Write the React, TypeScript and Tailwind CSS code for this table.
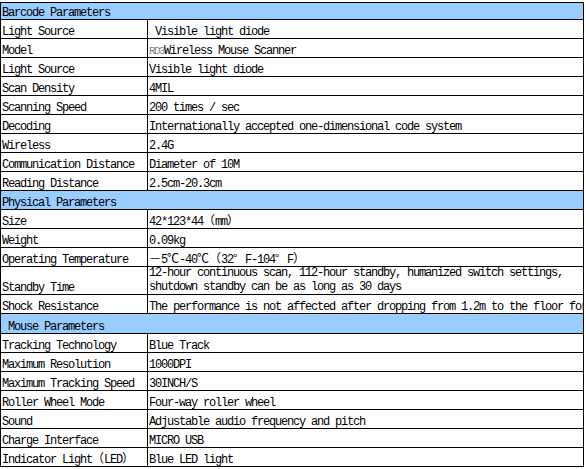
import React from "react";

const FW = ({ c }: { c: string }) => (
  <span className="inline-block w-[12px] tracking-normal text-left font-['Noto_Sans_CJK_SC',sans-serif]">
    {c}
  </span>
);

type Row =
  | { kind: "head"; text: string; h: string }
  | { kind: "row"; label: React.ReactNode; value: React.ReactNode; tall?: boolean };

const rows: Row[] = [
  { kind: "head", text: "Barcode Parameters", h: "h-[17px]" },
  { kind: "row", label: "Light Source", value: " Visible light diode" },
  {
    kind: "row",
    label: "Model",
    value: (
      <>
        <span className="text-[11px] tracking-[-1.6px] text-[#808080]">RD3</span>
        Wireless Mouse Scanner
      </>
    ),
  },
  { kind: "row", label: "Light Source", value: "Visible light diode" },
  { kind: "row", label: "Scan Density", value: "4MIL" },
  { kind: "row", label: "Scanning Speed", value: "200 times / sec" },
  { kind: "row", label: "Decoding", value: "Internationally accepted one-dimensional code system" },
  { kind: "row", label: "Wireless", value: "2.4G" },
  { kind: "row", label: "Communication Distance", value: "Diameter of 10M" },
  { kind: "row", label: "Reading Distance", value: "2.5cm-20.3cm" },
  { kind: "head", text: "Physical Parameters", h: "h-[19px]" },
  {
    kind: "row",
    label: "Size",
    value: (
      <>
        42*123*44
        <FW c="（" />
        mm
        <FW c="）" />
      </>
    ),
  },
  { kind: "row", label: "Weight", value: "0.09kg" },
  {
    kind: "row",
    label: "Operating Temperature",
    value: (
      <>
        <FW c="－" />5<FW c="℃" />-40<FW c="℃" />
        <FW c="（" />
        32<FW c="°" />F-104<FW c="°" />F<FW c="）" />
      </>
    ),
  },
  {
    kind: "row",
    label: "Standby Time",
    tall: true,
    value: (
      <>
        12-hour continuous scan, 112-hour standby, humanized switch settings,
        <br />
        shutdown standby can be as long as 30 days
      </>
    ),
  },
  {
    kind: "row",
    label: "Shock Resistance",
    value: "The performance is not affected after dropping from 1.2m to the floor for",
  },
  { kind: "head", text: " Mouse Parameters", h: "h-[20px]" },
  { kind: "row", label: "Tracking Technology", value: "Blue Track" },
  { kind: "row", label: "Maximum Resolution", value: "1000DPI" },
  { kind: "row", label: "Maximum Tracking Speed", value: "30INCH/S" },
  { kind: "row", label: "Roller Wheel Mode", value: "Four-way roller wheel" },
  { kind: "row", label: "Sound", value: "Adjustable audio frequency and pitch" },
  { kind: "row", label: "Charge Interface", value: "MICRO USB" },
  {
    kind: "row",
    label: (
      <>
        Indicator Light<FW c="（" />
        LED
        <FW c="）" />
      </>
    ),
    value: "Blue LED light",
  },
];

export default function App() {
  return (
    <div className="w-[586px] h-[469px] bg-white pt-[2px] font-['Liberation_Mono','Noto_Sans_CJK_SC',monospace] text-[12px] tracking-[-1.2px] text-black">
      <div className="w-[584px] border-l border-t border-black grid grid-cols-[147px_436px]">
        {rows.map((r, i) =>
          r.kind === "head" ? (
            <div
              key={i}
              className={`col-span-2 ${r.h} bg-[#99ccff] border-r border-b border-black pl-[1px] flex items-end leading-[12px] whitespace-pre overflow-hidden`}
            >
              <span>{r.text}</span>
            </div>
          ) : (
            <React.Fragment key={i}>
              <div
                className={`${r.tall ? "h-[28px]" : "h-[19px]"} border-r border-b border-black pl-[1px] flex items-end leading-[12px] whitespace-pre overflow-hidden`}
              >
                <span>{r.label}</span>
              </div>
              <div
                className={`${r.tall ? "h-[28px] leading-[14px]" : "h-[19px] leading-[12px]"} border-r border-b border-black pl-[1px] flex items-end whitespace-pre overflow-hidden`}
              >
                <span>{r.value}</span>
              </div>
            </React.Fragment>
          )
        )}
      </div>
    </div>
  );
}
